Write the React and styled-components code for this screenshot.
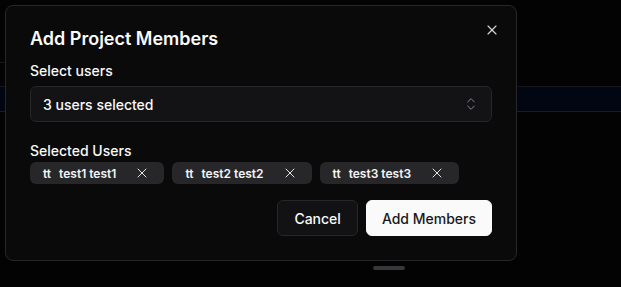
import React from 'react'
import styled, { createGlobalStyle } from 'styled-components';
import { X, ChevronsUpDown } from 'lucide-react';

const GlobalStyle = createGlobalStyle`
  html, body {
    margin: 0;
    padding: 0;
    background: #030303;
  }
  body {
    font-family: Inter, "Noto Sans", "Liberation Sans", sans-serif;
    -webkit-font-smoothing: antialiased;
  }
  * { box-sizing: border-box; }
`;

const Page = styled.div`
  position: relative;
  width: 621px;
  height: 287px;
  overflow: hidden;
  display: flex;
  flex-direction: column;
`;

const BgRow = styled.div`
  height: ${p => p.h}px;
  flex-shrink: 0;
  border-bottom: 1px solid ${p => p.line || '#17171a'};
  background: ${p => p.bg || 'transparent'};
`;

const BgSpacer = styled.div`
  height: ${p => p.h}px;
  flex-shrink: 0;
`;

const BgLine = styled.div`
  width: ${p => p.w}px;
  height: 1px;
  flex-shrink: 0;
  background: #17171a;
`;

const BgFill = styled.div`
  flex: 1;
`;

const HandleBar = styled.div`
  padding: 0 0 17px 373px;
`;

const Handle = styled.div`
  width: 32px;
  height: 4px;
  border-radius: 2px;
  background: #38383b;
`;

const Dialog = styled.div`
  position: absolute;
  left: 5px;
  top: 5px;
  width: 512px;
  background: #0a0a0b;
  border: 1px solid #27272a;
  border-radius: 8px;
  padding: 24px;
  display: flex;
  flex-direction: column;
  color: #fafafa;
`;

const CloseButton = styled.button`
  position: absolute;
  top: 16px;
  right: 16px;
  width: 16px;
  height: 16px;
  padding: 0;
  border: none;
  background: none;
  color: #d4d4d8;
  display: flex;
  cursor: pointer;
`;

const Title = styled.h2`
  margin: 0;
  font-size: 18px;
  line-height: 18px;
  font-weight: 600;
`;

const Label = styled.label`
  display: block;
  font-size: 14px;
  line-height: 14px;
  font-weight: 500;
  margin-top: ${p => p.top}px;
`;

const SelectBox = styled.div`
  margin-top: 8px;
  height: 36px;
  border: 1px solid #27272a;
  border-radius: 6px;
  background: #131315;
  display: flex;
  align-items: center;
  justify-content: space-between;
  padding: 0 12px;
  font-size: 14px;
  font-weight: 500;
  color: #fafafa;
  svg {
    color: #a1a1aa;
    opacity: 0.8;
  }
`;

const ChipList = styled.div`
  margin-top: 4px;
  display: flex;
  gap: 8px;
`;

const Chip = styled.div`
  height: 22px;
  display: flex;
  align-items: center;
  padding: 0 12px 0 13px;
  border-radius: 6px;
  background: #27272a;
  font-size: 12px;
  font-weight: 600;
  color: #f4f4f5;
`;

const Initials = styled.span`
  margin-right: 8px;
`;

const RemoveButton = styled.button`
  margin-left: 16px;
  padding: 2px;
  border: none;
  background: none;
  color: #e4e4e7;
  display: flex;
  cursor: pointer;
`;

const Footer = styled.div`
  margin-top: 16px;
  display: flex;
  justify-content: flex-end;
  gap: 8px;
`;

const Button = styled.button`
  height: 36px;
  padding: 0 ${p => p.primary ? '15px' : '16px'};
  border-radius: 6px;
  font-family: inherit;
  font-size: 14px;
  font-weight: 500;
  cursor: pointer;
  border: 1px solid ${p => p.primary ? '#fafafa' : '#27272a'};
  background: ${p => p.primary ? '#fafafa' : '#121214'};
  color: ${p => p.primary ? '#18181b' : '#fafafa'};
`;

const users = [
  { id: 1, initials: 'tt', name: 'test1 test1' },
  { id: 2, initials: 'tt', name: 'test2 test2' },
  { id: 3, initials: 'tt', name: 'test3 test3' },
];

export default function App() {
  return (
    <>
      <GlobalStyle />
      <Page>
        <BgSpacer h={62} />
        <BgLine w={200} />
        <BgRow h={24} />
        <BgRow h={25} bg="#020612" line="#1c1c22" />
        <BgFill />
        <HandleBar>
          <Handle />
        </HandleBar>

        <Dialog>
          <CloseButton aria-label="Close">
            <X size={16} strokeWidth={1.75} />
          </CloseButton>
          <Title>Add Project Members</Title>
          <Label top={16}>Select users</Label>
          <SelectBox>
            <span>3 users selected</span>
            <ChevronsUpDown size={16} strokeWidth={1.5} />
          </SelectBox>
          <Label top={22}>Selected Users</Label>
          <ChipList>
            {users.map(u => (
              <Chip key={u.id}>
                <Initials>{u.initials}</Initials>
                {u.name}
                <RemoveButton aria-label="Remove">
                  <X size={16} strokeWidth={1.5} />
                </RemoveButton>
              </Chip>
            ))}
          </ChipList>
          <Footer>
            <Button>Cancel</Button>
            <Button primary>Add Members</Button>
          </Footer>
        </Dialog>
      </Page>
    </>
  )
}
